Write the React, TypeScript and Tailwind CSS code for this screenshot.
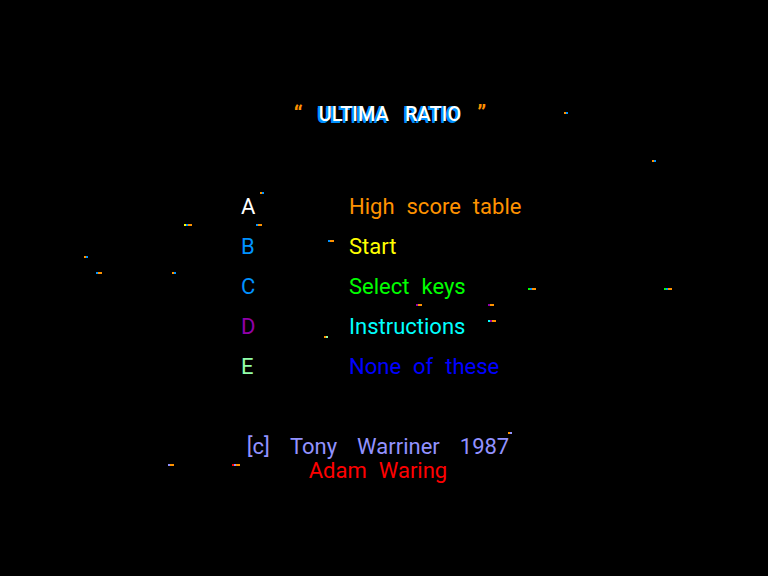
import React from "react";

type Spark = { x: number; y: number; parts: string[] };

const ORANGE = "bg-[#ff9200]";
const BLUE = "bg-[#0092ff]";
const LAVENDER = "bg-[#9292ff]";
const PURPLE = "bg-[#9200aa]";
const GREEN = "bg-[#00ff00]";

const sparks: Spark[] = [
  { x: 564, y: 112, parts: [ORANGE, BLUE] },
  { x: 652, y: 160, parts: [ORANGE, BLUE] },
  { x: 260, y: 192, parts: [ORANGE, BLUE] },
  { x: 184, y: 224, parts: ["bg-[#ffff00]", BLUE, ORANGE, ORANGE] },
  { x: 256, y: 224, parts: [BLUE, ORANGE, ORANGE] },
  { x: 328, y: 240, parts: [BLUE, ORANGE, ORANGE] },
  { x: 84, y: 256, parts: [ORANGE, BLUE] },
  { x: 96, y: 272, parts: [BLUE, ORANGE, ORANGE] },
  { x: 172, y: 272, parts: [ORANGE, BLUE] },
  { x: 528, y: 288, parts: [GREEN, BLUE, ORANGE, ORANGE] },
  { x: 664, y: 288, parts: [GREEN, BLUE, ORANGE, ORANGE] },
  { x: 416, y: 304, parts: [PURPLE, ORANGE, ORANGE] },
  { x: 488, y: 304, parts: [PURPLE, ORANGE, ORANGE] },
  { x: 488, y: 320, parts: ["bg-[#00ffff]", PURPLE, ORANGE, ORANGE] },
  { x: 324, y: 336, parts: [ORANGE, "bg-[#92ffaa]"] },
  { x: 508, y: 432, parts: [ORANGE, LAVENDER] },
  { x: 168, y: 464, parts: [LAVENDER, ORANGE, ORANGE] },
  { x: 232, y: 464, parts: ["bg-[#ff0000]", LAVENDER, ORANGE, ORANGE] },
];

const menu = [
  { key: "A", label: "High score table", keyColor: "text-white", color: "text-[#ff9200]" },
  { key: "B", label: "Start", keyColor: "text-[#0092ff]", color: "text-[#ffff00]" },
  { key: "C", label: "Select keys", keyColor: "text-[#0092ff]", color: "text-[#00ff00]" },
  { key: "D", label: "Instructions", keyColor: "text-[#9200aa]", color: "text-[#00ffff]" },
  { key: "E", label: "None of these", keyColor: "text-[#92ffaa]", color: "text-[#0000ff]" },
];

function Words({ text, gap = "gap-3" }: { text: string; gap?: string }) {
  return (
    <span className={`flex ${gap}`}>
      {text.split(" ").map((word, i) => (
        <React.Fragment key={i}>
          {i > 0 && " "}
          <span>{word}</span>
        </React.Fragment>
      ))}
    </span>
  );
}

export default function App() {
  return (
    <main className="relative min-h-screen overflow-hidden bg-black pt-[94px] font-['Roboto','Liberation_Sans',sans-serif] text-[22px] whitespace-nowrap">
      <div aria-hidden="true">
        {sparks.map((s, i) => (
          <span key={i} className="absolute flex" style={{ left: s.x, top: s.y }}>
            {s.parts.map((c, j) => (
              <span key={j} className={`size-0.5 ${c}`} />
            ))}
          </span>
        ))}
      </div>

      <h1 className="flex justify-center gap-4 pl-3 leading-10">
        <span className="font-bold text-[#ff9200]">“</span>{" "}
        <span className="text-[20px] font-medium text-white [text-shadow:-2px_0_0_#0092ff,-2px_2px_0_#0092ff]">
          <Words text="ULTIMA RATIO" gap="gap-4" />
        </span>{" "}
        <span className="font-bold text-[#ff9200]">”</span>
      </h1>

      <nav className="mx-auto mt-[53px] w-[286px]">
        {menu.map((m) => (
          <button key={m.key} type="button" className="grid w-full grid-cols-[108px_1fr] text-left leading-10">
            <span className={m.keyColor}>{m.key}</span> <span className={m.color}>
              <Words text={m.label} />
            </span>
          </button>
        ))}
      </nav>

      <footer className="mt-12 flex flex-col items-center pr-3 leading-6">
        <p className="text-[#9292ff]">
          <Words text="[c] Tony Warriner 1987" gap="gap-5" />
        </p>
        <p className="text-[#ff0000]">
          <Words text="Adam Waring" />
        </p>
      </footer>
    </main>
  );
}
